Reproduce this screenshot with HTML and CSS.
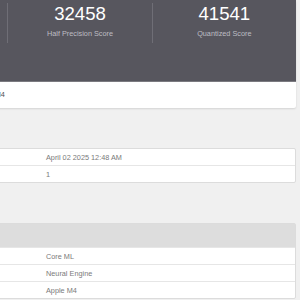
FILE: index.html
```html
<!DOCTYPE html>
<html lang="en">
<head>
    <meta charset="UTF-8">
    <meta name="viewport" content="width=device-width, initial-scale=1.0">
    <title>Geekbench AI Result</title>
    <link rel="stylesheet" href="styles.css">
</head>
<body>
    <div class="page">
        <div class="card score-card">
            <div class="score-header">
                <div class="score-col">
                    <div class="score-value">28113</div>
                    <div class="score-label">Single Precision Score</div>
                </div>
                <div class="score-col">
                    <div class="score-value">32458</div>
                    <div class="score-label">Half Precision Score</div>
                </div>
                <div class="score-col">
                    <div class="score-value">41541</div>
                    <div class="score-label">Quantized Score</div>
                </div>
            </div>
            <div class="device-name">Apple M4</div>
        </div>

        <h3 class="section-title">Result Information</h3>
        <div class="card table-card">
            <div class="table-row">
                <div class="cell-label">Upload Date</div>
                <div class="cell-value">April 02 2025 12:48 AM</div>
            </div>
            <div class="table-row">
                <div class="cell-label">Views</div>
                <div class="cell-value">1</div>
            </div>
        </div>

        <h3 class="section-title">Inference</h3>
        <div class="card table-card">
            <div class="table-head">Inference Information</div>
            <div class="table-row">
                <div class="cell-label">Framework</div>
                <div class="cell-value">Core ML</div>
            </div>
            <div class="table-row">
                <div class="cell-label">Backend</div>
                <div class="cell-value">Neural Engine</div>
            </div>
            <div class="table-row">
                <div class="cell-label">Device</div>
                <div class="cell-value">Apple M4</div>
            </div>
        </div>
    </div>
</body>
</html>
```

FILE: styles.css
```css
:root {
    --page-bg: #f0f0f0;
    --dark: #57565e;
    --dark-line: #6f6e76;
    --border: #dcdcdc;
    --row-line: #e6e6e6;
    --text: #4a4a4a;
    --muted: #7a7a7a;
}

* {
    margin: 0;
    padding: 0;
    box-sizing: border-box;
    font-family: 'Liberation Sans', Arial, sans-serif;
}

body {
    background: var(--page-bg);
    color: var(--text);
    overflow: hidden;
}

.page {
    width: 432px;
    margin-left: -136px;
}

.card {
    background: white;
    border-radius: 2px;
    box-shadow: 0 1px 2px rgba(0, 0, 0, 0.12);
}

/* Score card */
.score-header {
    display: flex;
    background: var(--dark);
    padding: 3px 0 38px;
    border-bottom: 1px solid #7b7a80;
}

.score-col {
    flex: 1;
    text-align: center;
    padding-bottom: 3.5px;
}

.score-col + .score-col {
    border-left: 1px solid var(--dark-line);
}

.score-value {
    font-size: 18.6px;
    line-height: 21px;
    color: white;
}

.score-label {
    margin-top: 5px;
    font-size: 7.3px;
    line-height: 10px;
    color: #bdbdc3;
}

.device-name {
    padding: 8px 0 8px 110px;
    font-size: 7.3px;
    line-height: 10px;
    color: #505050;
}

.section-title {
    height: 40px;
    padding: 14px 10px 0;
    font-size: 10px;
    line-height: 12px;
    font-weight: normal;
    color: transparent;
}

/* Tables */
.table-card {
    border: 1px solid var(--border);
    box-shadow: none;
}

.table-head {
    height: 23px;
    background: #dddddd;
    padding: 6px 8px;
    font-size: 7.3px;
    color: transparent;
}

.table-row {
    display: grid;
    grid-template-columns: 173px 1fr;
    height: 16px;
}

.table-row + .table-row,
.table-head + .table-row {
    height: 17px;
    border-top: 1px solid var(--row-line);
}

.cell-label,
.cell-value {
    padding: 4px 8px 2px;
    font-size: 7.3px;
    line-height: 10px;
    color: var(--muted);
}
```
